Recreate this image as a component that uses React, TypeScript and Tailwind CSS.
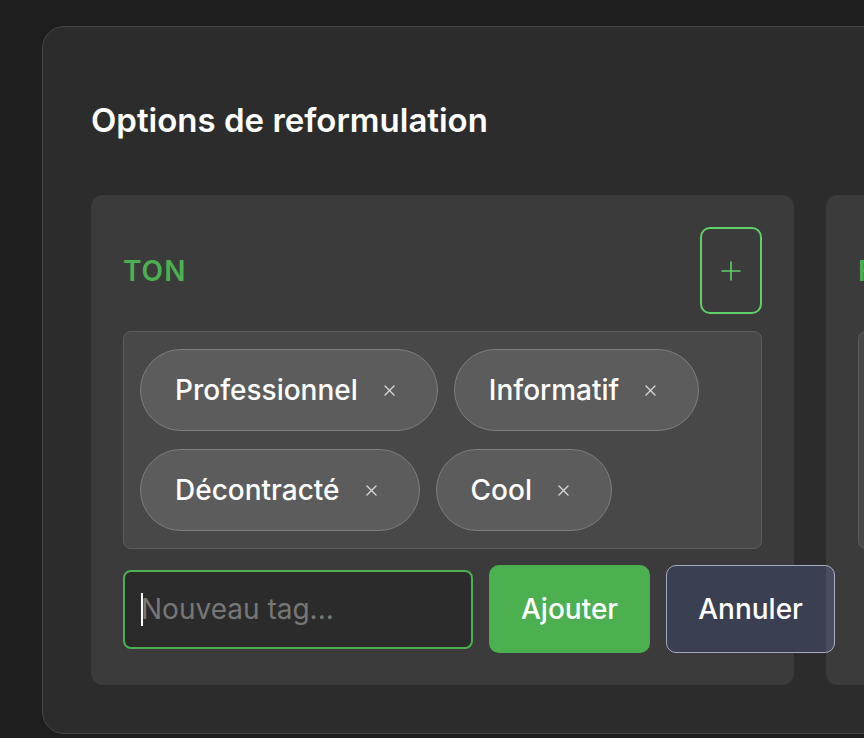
import React, { useState } from "react";

type Tag = { id: number; label: string };

const XIcon = () => (
  <svg width="11" height="11" viewBox="0 0 11 11" className="text-[#d6d6d6]">
    <path d="M1 1L10 10M10 1L1 10" stroke="currentColor" strokeWidth="1.4" strokeLinecap="round" />
  </svg>
);

const PlusIcon = () => (
  <svg width="20" height="20" viewBox="0 0 20 20" className="text-[#5fd068]">
    <path d="M10 0.5V19.5M0.5 10H19.5" stroke="currentColor" strokeWidth="1.6" />
  </svg>
);

const Chip = ({ label }: { label: string }) => (
  <div className="flex h-[82px] items-center rounded-full border border-[#7e7e7e] bg-[#5c5c5c] pl-[34px] pr-[42px] text-[28px] font-medium text-white">
    <span>{label}</span>
    <button className="ml-[26px] flex items-center">
      <XIcon />
    </button>
  </div>
);

const OptionPanel = ({ title, tags, editing }: { title: string; tags: Tag[]; editing: boolean }) => {
  return (
    <div className="w-[703px] shrink-0 rounded-xl bg-white/[0.07] p-8">
      <div className="flex h-[87px] items-center justify-between">
        <h3 className="text-[28px] font-semibold tracking-[1px] text-[#4caf50]">{title}</h3>
        <button className="flex h-[87px] w-[62px] items-center justify-center rounded-[10px] border-2 border-[#5fd068]">
          <PlusIcon />
        </button>
      </div>
      <div className="mt-[17px] flex flex-wrap gap-x-[16px] gap-y-[18px] rounded-lg border border-[#5c5c5c] bg-[#484848] px-4 pt-[17px] pb-[17px]">
        {tags.map((tag) => (
          <Chip key={tag.id} label={tag.label} />
        ))}
      </div>
      {editing && (
        <div className="mt-4 flex items-center gap-4">
          <div className="relative shrink-0">
            <input
              type="text"
              placeholder="Nouveau tag..."
              className="h-[79px] w-[350px] rounded-lg border-2 border-[#4caf50] bg-[#2b2b2b] px-4 text-[28px] text-white outline-none placeholder:text-[#777777]"
            />
            <span className="absolute left-[18px] top-[23px] h-[33px] w-[2px] bg-white" />
          </div>
          <button className="h-[88px] shrink-0 rounded-[10px] bg-[#4caf50] px-[32px] text-[28px] font-medium text-white">
            Ajouter
          </button>
          <button className="h-[88px] shrink-0 rounded-[10px] border-[1.5px] border-[#a3abc2] bg-[#3a3f52] px-[31px] text-[28px] font-medium text-white">
            Annuler
          </button>
        </div>
      )}
    </div>
  );
};

export default function App() {
  const [tonTags] = useState<Tag[]>([
    { id: 1, label: "Professionnel" },
    { id: 2, label: "Informatif" },
    { id: 3, label: "Décontracté" },
    { id: 4, label: "Cool" },
  ]);
  const [formatTags] = useState<Tag[]>([
    { id: 1, label: "Paragraphe" },
    { id: 2, label: "Liste à puces" },
    { id: 3, label: "Email" },
    { id: 4, label: "Résumé" },
  ]);

  return (
    <div
      className="h-[738px] w-[864px] overflow-hidden bg-[#1e1e1e] pl-[42px] pt-[26px]"
      style={{ fontFamily: "Inter, 'Noto Sans', sans-serif" }}
    >
      <div className="h-[708px] w-[1600px] rounded-[22px] border border-[#454545] bg-[#2c2c2c] px-12 pt-[69px]">
        <h2 className="text-[33px] leading-[48px] font-semibold text-white">Options de reformulation</h2>
        <div className="mt-[51px] flex gap-8">
          <OptionPanel title="TON" tags={tonTags} editing />
          <OptionPanel title="FORMAT" tags={formatTags} editing={false} />
        </div>
      </div>
    </div>
  );
}
